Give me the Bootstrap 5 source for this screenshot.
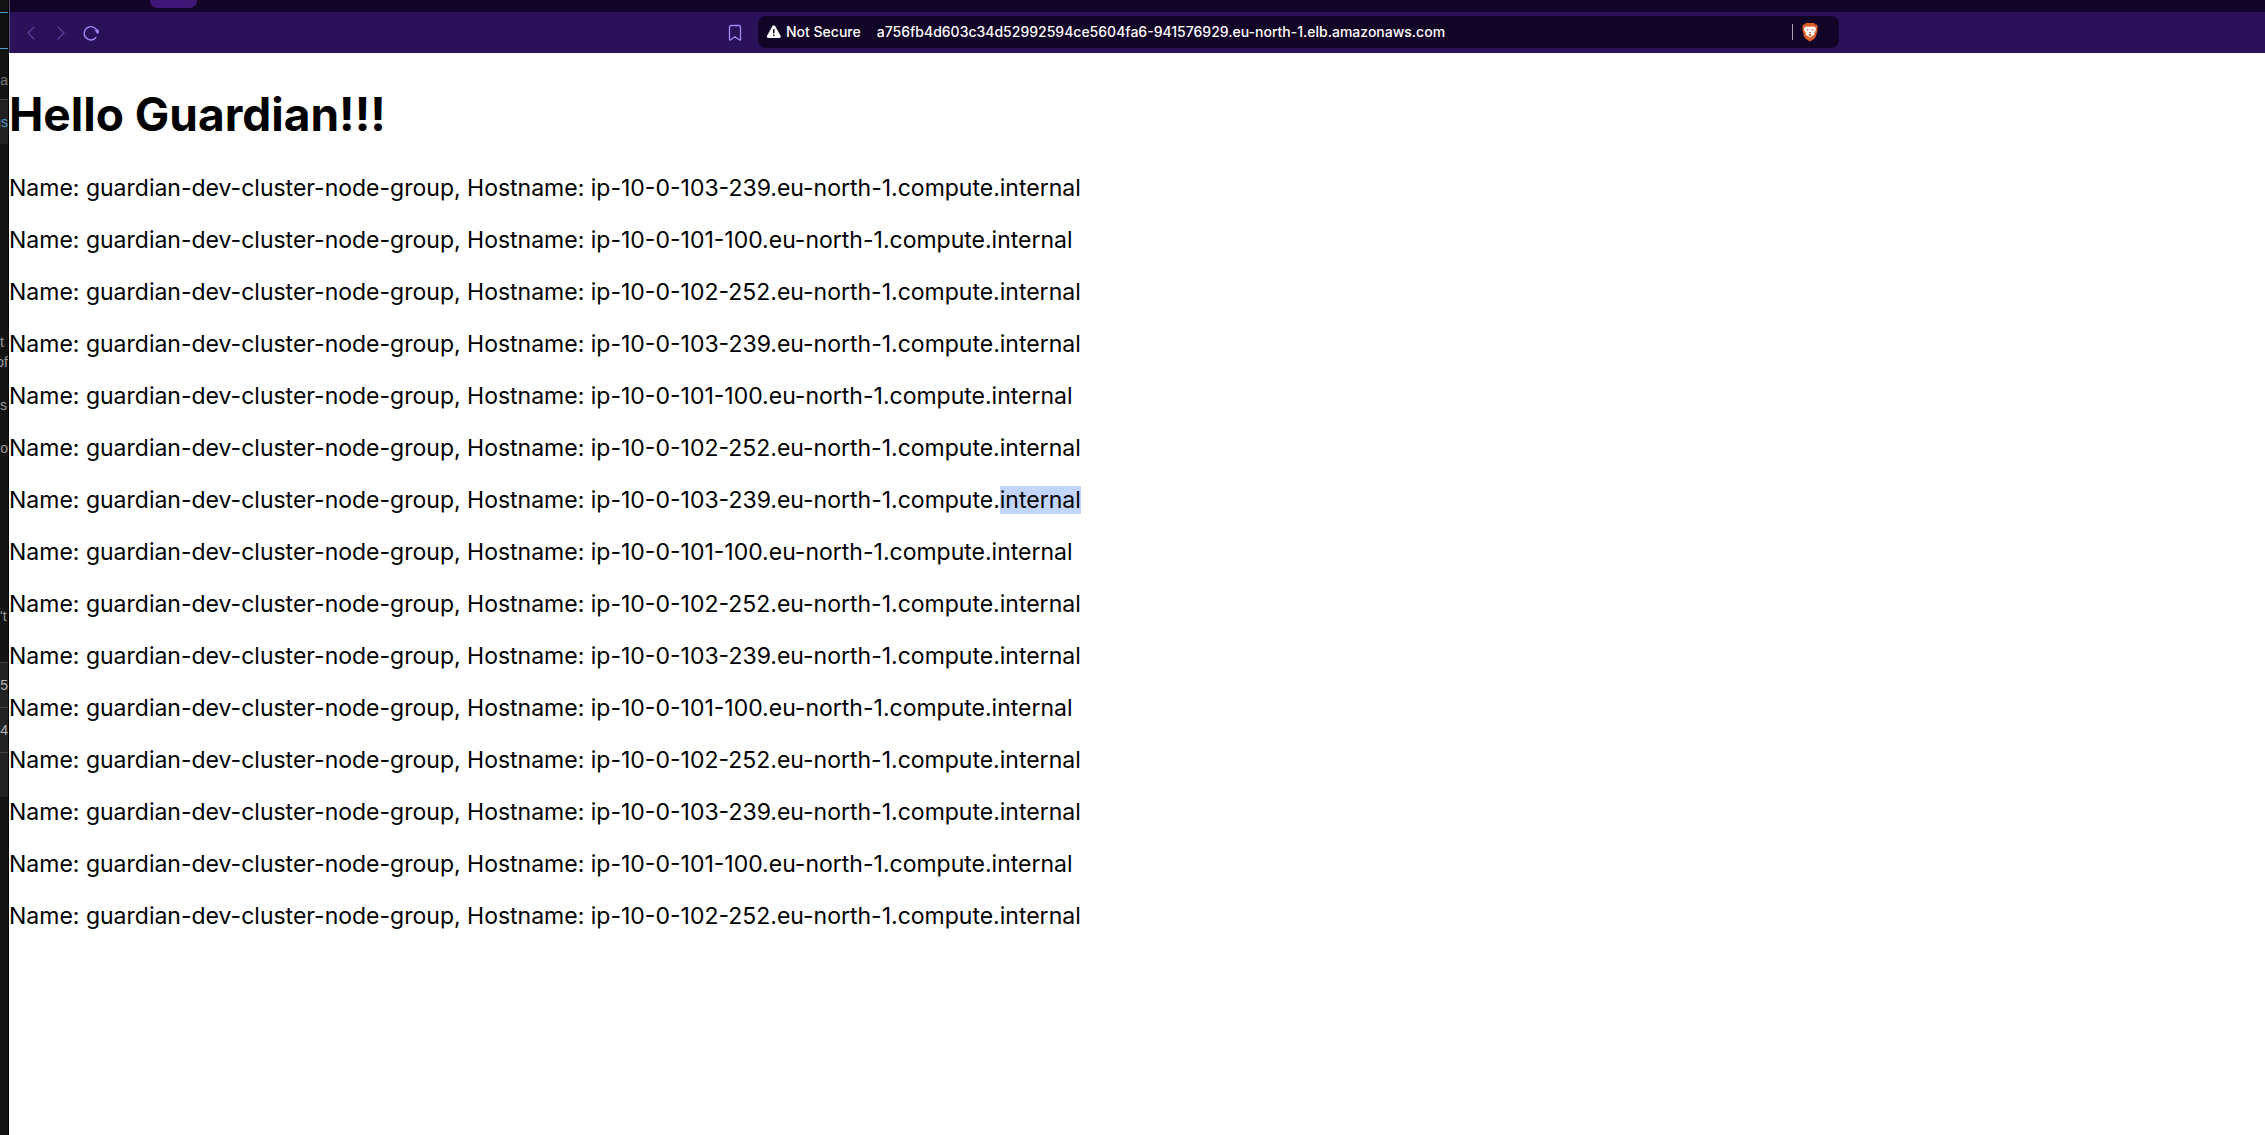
<!DOCTYPE html>
<html lang="en">
<head>
<meta charset="utf-8">
<meta name="viewport" content="width=device-width, initial-scale=1">
<title>Hello Guardian</title>
<link rel="stylesheet" href="https://cdn.jsdelivr.net/npm/bootstrap@5.3.0/dist/css/bootstrap.min.css">
<style>
  body { font-family: Inter, "Liberation Sans", sans-serif; background: #fff; color: #000; }

  /* Sliver of the window behind */
  .backdrop-strip { width: 9px; background: #141414; border-right: 1px solid #000; font-family: "Liberation Sans", sans-serif; font-size: 14px; line-height: 20px; color: #9a9a9a; }
  .strip-row { display: flex; justify-content: flex-end; align-items: center; white-space: nowrap; overflow: hidden; }
  .strip-start { justify-content: flex-start; }
  .strip-active { height: 37px; margin-top: 12px; border-top: 1px solid #4d9bcf; border-bottom: 1px solid #4d9bcf; background: #101010; }
  .strip-label { height: 50px; padding-top: 12px; color: #777; }
  .strip-link { height: 45px; border-top: 1px solid #444; background: #222; margin-bottom: 188px; }
  .strip-link a { color: #4d9bcf; }
  .strip-gap { margin-bottom: 23px; }
  .strip-last { margin-top: 148px; margin-bottom: 36px; }
  .strip-cell { height: 45px; border-top: 1px solid #444; background: #222; color: #b5b5b5; }

  /* Browser chrome */
  .window-chrome { border-left: 1px solid #584a80; }
  .tab-strip { height: 12px; padding-left: 140px; background: #120427; }
  .tab-pill { width: 47px; height: 8px; border-radius: 0 0 7px 7px; background: #3f1877; }
  .toolbar { display: grid; grid-template-columns: 748fr 1081fr 426fr; height: 41px; background: #2a1158; }
  .nav-set { padding: 0 14px 0 12px; }
  .tool-btn { display: flex; width: 18px; height: 20px; padding: 0; border: 0; background: none; align-items: center; justify-content: center; color: #a588f7; }
  .tool-btn:disabled { color: #5d3d9c; }
  .address-bar { height: 32px; margin-top: 4px; padding: 0 20px 0 8px; border-radius: 8px; background: #120427; color: #fff; font-size: 14px; font-weight: 500; line-height: 20px; }
  .address-input { min-width: 0; padding: 0; border: 0; outline: 0; background: none; color: #fff; font: inherit; }
  .address-rule { width: 1px; height: 16px; background: #aaa4b4; }

  /* Page */
  .page-body { padding-top: 33px; }
  .page-title { margin: 0 0 32px; font-size: 46px; line-height: 56px; font-weight: 700; }
  .node-line { margin: 0 0 24px; font-size: 23px; line-height: 28px; }
  .picked { background: #c1d5fd; }
</style>
<script src="https://cdn.jsdelivr.net/npm/bootstrap@5.3.0/dist/js/bootstrap.bundle.min.js"></script>
</head>
<body>
<div class="d-flex min-vh-100">
  <aside class="backdrop-strip flex-shrink-0">
    <div class="strip-row strip-active"></div>
    <div class="strip-row strip-label">a</div>
    <div class="strip-row strip-link"><a href="#" class="text-decoration-none">gs</a></div>
    <div class="strip-row strip-start">t</div>
    <div class="strip-row strip-gap">of</div>
    <div class="strip-row strip-start strip-gap">s</div>
    <div class="strip-row">ro</div>
    <div class="strip-row strip-start strip-last">'t</div>
    <div class="strip-row strip-cell">75</div>
    <div class="strip-row strip-cell">74</div>
    <div class="strip-row strip-cell"></div>
  </aside>

  <div class="flex-grow-1">
    <header class="window-chrome">
      <div class="tab-strip"><div class="tab-pill"></div></div>
      <div class="toolbar">
        <div class="nav-set d-flex align-items-center justify-content-between">
          <div class="d-flex gap-2">
            <button class="tool-btn me-1" type="button" disabled aria-label="Back">
              <svg width="10" height="16" viewBox="0 0 10 16" fill="none" stroke="currentColor" stroke-width="1.3"><path d="M8.500 1.500 2 8l6.500 6.500"/></svg>
            </button>
            <button class="tool-btn me-1" type="button" disabled aria-label="Forward">
              <svg width="10" height="16" viewBox="0 0 10 16" fill="none" stroke="currentColor" stroke-width="1.3"><path d="M1.500 1.500 8 8l-6.500 6.500"/></svg>
            </button>
            <button class="tool-btn" type="button" aria-label="Reload">
              <svg width="18" height="18" viewBox="0 0 18 18" fill="none" stroke="currentColor" stroke-width="1.4"><path d="M14.300 13.200A6.700 6.700 0 1 1 15.200 7.200"/><path d="M12.800 6.200l3.600-1 .6 3.200-1.700 1.500z" fill="currentColor" stroke="none"/></svg>
            </button>
          </div>
          <button class="tool-btn" type="button" aria-label="Bookmark this page">
            <svg width="14" height="18" viewBox="0 0 14 18" fill="none" stroke="currentColor" stroke-width="1.3" stroke-linejoin="round"><path d="M1.500 3q0-1.500 1.500-1.500h8q1.500 0 1.500 1.500v12.600q0 .8-.8.400L7 12.700 2.300 16q-.8.400-.8-.4z"/></svg>
          </button>
        </div>
        <form class="address-bar d-flex align-items-center">
          <svg class="me-1" width="16" height="14" viewBox="0 0 16 14"><path d="M6.400 1.200Q8-.6 9.200 1.200l5.400 9.500Q15.500 13 13.400 13H2.200Q.1 13 1 10.700z" fill="#fff"/><path d="M7.800 4v4.200M7.800 9.500v1.600" stroke="#120427" stroke-width="1.500"/></svg>
          <label for="address" class="text-nowrap pe-3">Not Secure</label>
          <input id="address" class="address-input flex-grow-1" type="text" value="a756fb4d603c34d52992594ce5604fa6-941576929.eu-north-1.elb.amazonaws.com">
          <span class="address-rule me-2"></span>
          <button class="tool-btn" type="button" aria-label="Shields">
            <svg width="18" height="20" viewBox="0 0 18 20"><path d="M5 1h8l1.500 1.500 1.600.2.700 2.500-.6 1.300.4 1.500-1.700 6.200Q14.300 16 13 17l-4 2.500L5 17q-1.300-1-1.900-2.800L1.400 8l.4-1.500-.6-1.300.7-2.500 1.600-.2z" fill="#e0602c"/><path d="M5.500 4.400l3.500.4 3.500-.4 2.600 1.500-.3 2.300-1.700 2.700.3 1.700-2 1.400L9 15.500l-2.400-1.500-2-1.400.3-1.700-1.700-2.700-.3-2.300z" fill="#fff"/><path d="M5 7.200l2.700.4-.8 1.200zM13 7.200l-2.700.4.8 1.200zM8.400 10h1.200l.6 1.200H7.800zM7 13l2-1 2 1-2 1.200z" fill="#d9592d"/></svg>
          </button>
        </form>
      </div>
    </header>

    <main class="page-body">
      <h1 class="page-title">Hello Guardian!!!</h1>
      <p class="node-line">Name: guardian-dev-cluster-node-group, Hostname: ip-10-0-103-239.eu-north-1.compute.internal</p>
      <p class="node-line">Name: guardian-dev-cluster-node-group, Hostname: ip-10-0-101-100.eu-north-1.compute.internal</p>
      <p class="node-line">Name: guardian-dev-cluster-node-group, Hostname: ip-10-0-102-252.eu-north-1.compute.internal</p>
      <p class="node-line">Name: guardian-dev-cluster-node-group, Hostname: ip-10-0-103-239.eu-north-1.compute.internal</p>
      <p class="node-line">Name: guardian-dev-cluster-node-group, Hostname: ip-10-0-101-100.eu-north-1.compute.internal</p>
      <p class="node-line">Name: guardian-dev-cluster-node-group, Hostname: ip-10-0-102-252.eu-north-1.compute.internal</p>
      <p class="node-line">Name: guardian-dev-cluster-node-group, Hostname: ip-10-0-103-239.eu-north-1.compute.<span class="picked">internal</span></p>
      <p class="node-line">Name: guardian-dev-cluster-node-group, Hostname: ip-10-0-101-100.eu-north-1.compute.internal</p>
      <p class="node-line">Name: guardian-dev-cluster-node-group, Hostname: ip-10-0-102-252.eu-north-1.compute.internal</p>
      <p class="node-line">Name: guardian-dev-cluster-node-group, Hostname: ip-10-0-103-239.eu-north-1.compute.internal</p>
      <p class="node-line">Name: guardian-dev-cluster-node-group, Hostname: ip-10-0-101-100.eu-north-1.compute.internal</p>
      <p class="node-line">Name: guardian-dev-cluster-node-group, Hostname: ip-10-0-102-252.eu-north-1.compute.internal</p>
      <p class="node-line">Name: guardian-dev-cluster-node-group, Hostname: ip-10-0-103-239.eu-north-1.compute.internal</p>
      <p class="node-line">Name: guardian-dev-cluster-node-group, Hostname: ip-10-0-101-100.eu-north-1.compute.internal</p>
      <p class="node-line">Name: guardian-dev-cluster-node-group, Hostname: ip-10-0-102-252.eu-north-1.compute.internal</p>
    </main>
  </div>
</div>
</body>
</html>
